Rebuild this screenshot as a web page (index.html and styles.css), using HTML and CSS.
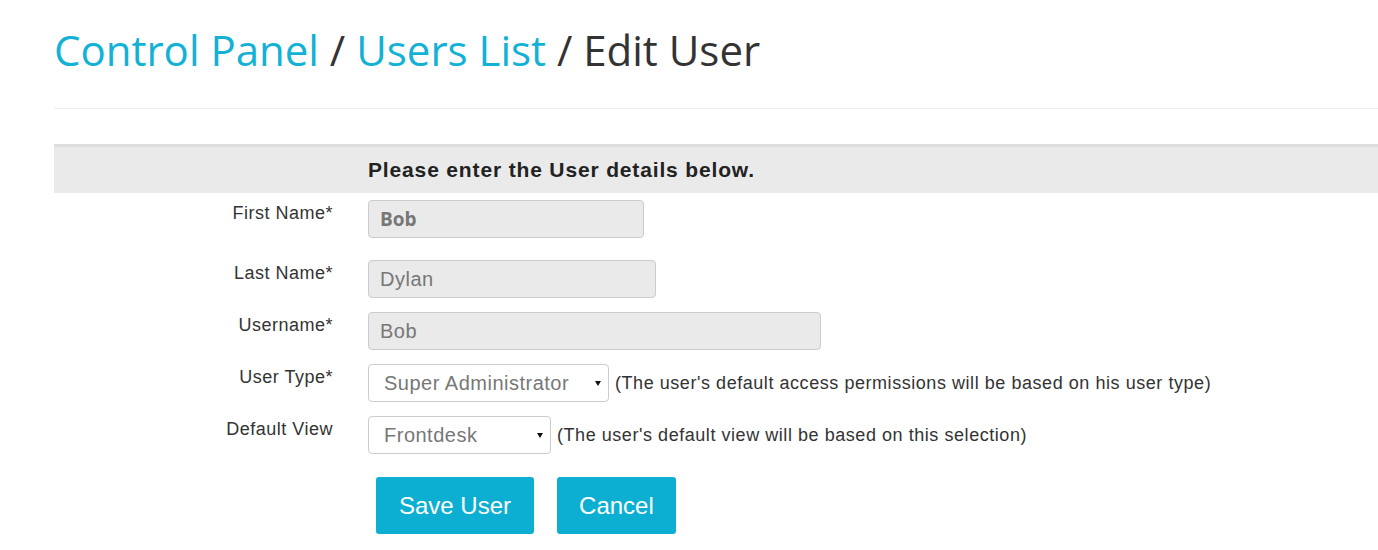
FILE: index.html
```html
<!DOCTYPE html>
<html>
<head>
<meta charset="utf-8">
<link rel="stylesheet" href="styles.css">
</head>
<body>
<div class="page">
  <h1 class="title"><a class="crumb">Control Panel</a> / <a class="crumb">Users List</a> / Edit User</h1>
  <div class="rule"></div>
  <div class="band"><div class="band-spacer"></div><div class="band-text">Please enter the User details below.</div></div>
  <form class="form">
    <div class="row row-first">
      <label class="label">First Name*</label>
      <div class="field"><input class="input input-bold w-first" value="Bob" readonly></div>
    </div>
    <div class="row row-2">
      <label class="label">Last Name*</label>
      <div class="field"><input class="input w-last" value="Dylan" readonly></div>
    </div>
    <div class="row">
      <label class="label">Username*</label>
      <div class="field"><input class="input w-user" value="Bob" readonly></div>
    </div>
    <div class="row">
      <label class="label">User Type*</label>
      <div class="field">
        <div class="select w-type"><span>Super Administrator</span><i class="caret"></i></div>
        <span class="help">(The user's default access permissions will be based on his user type)</span>
      </div>
    </div>
    <div class="row">
      <label class="label">Default View</label>
      <div class="field">
        <div class="select w-view"><span>Frontdesk</span><i class="caret"></i></div>
        <span class="help">(The user's default view will be based on this selection)</span>
      </div>
    </div>
    <div class="row row-buttons">
      <div></div>
      <div class="buttons">
        <button type="button" class="btn">Save User</button>
        <button type="button" class="btn btn-cancel">Cancel</button>
      </div>
    </div>
  </form>
</div>
</body>
</html>
```
FILE: styles.css
```css
* { box-sizing: border-box; }
html, body { margin: 0; padding: 0; background: #fff; }
body { font-family: "Liberation Sans", Arial, sans-serif; color: #333; }
.page { padding-left: 54px; }
.title {
  margin: 28px 0 0 0;
  font-family: "Open Sans", sans-serif;
  font-weight: 400;
  font-size: 42px;
  line-height: 44px;
  color: #333;
}
.crumb { color: #12b1d6; text-decoration: none; }
.rule { margin-top: 36px; height: 1px; background: #eeeeee; }
.band {
  margin-top: 35px;
  border-top: 3px solid #dddddd;
  background: #eaeaea;
  height: 49px;
  display: grid;
  grid-template-columns: 279px 1fr;
  column-gap: 35px;
  align-items: center;
}
.band-text { font-weight: bold; font-size: 21px; letter-spacing: 0.85px; color: #222; }
.form { margin-top: 7px; }
.row {
  display: grid;
  grid-template-columns: 279px 1fr;
  column-gap: 35px;
  margin-bottom: 14px;
}
.row-first { margin-bottom: 22px; }
.label {
  text-align: right;
  font-size: 18px;
  letter-spacing: 0.5px;
  line-height: 20px;
  padding-top: 3px;
  color: #333;
}
.field { display: flex; align-items: center; gap: 6px; }
.input {
  height: 38px;
  border: 1px solid #cccccc;
  border-radius: 4px;
  background: #eaeaea;
  color: #777;
  font-family: "Liberation Sans", Arial, sans-serif;
  font-size: 20px;
  letter-spacing: 0.5px;
  padding: 0 11px;
  outline: none;
}
.input-bold { font-family: "Open Sans", sans-serif; font-weight: bold; font-size: 19px; letter-spacing: 0; }
.w-first { width: 276px; }
.w-last { width: 288px; }
.w-user { width: 453px; }
.select {
  height: 38px;
  border: 1px solid #cccccc;
  border-radius: 4px;
  background: #fff;
  color: #777;
  font-size: 20px;
  letter-spacing: 0.5px;
  padding: 0 7px 0 15px;
  display: flex;
  align-items: center;
  justify-content: space-between;
}
.w-type { width: 241px; }
.w-view { width: 183px; }
.caret {
  width: 0; height: 0;
  border-left: 3px solid transparent;
  border-right: 3px solid transparent;
  border-top: 5px solid #111;
  margin-top: 1px;
}
.help { font-size: 18px; letter-spacing: 0.55px; color: #333; }
.row-buttons { margin-top: 23px; }
.buttons { display: flex; gap: 23px; padding-left: 8px; }
.btn {
  height: 57px;
  padding: 0 23px;
  border: none;
  border-radius: 3px;
  background: #0cafd1;
  color: #fff;
  font-family: "Liberation Sans", Arial, sans-serif;
  font-size: 24px;
}
.btn-cancel { padding: 0 22px; }
```
